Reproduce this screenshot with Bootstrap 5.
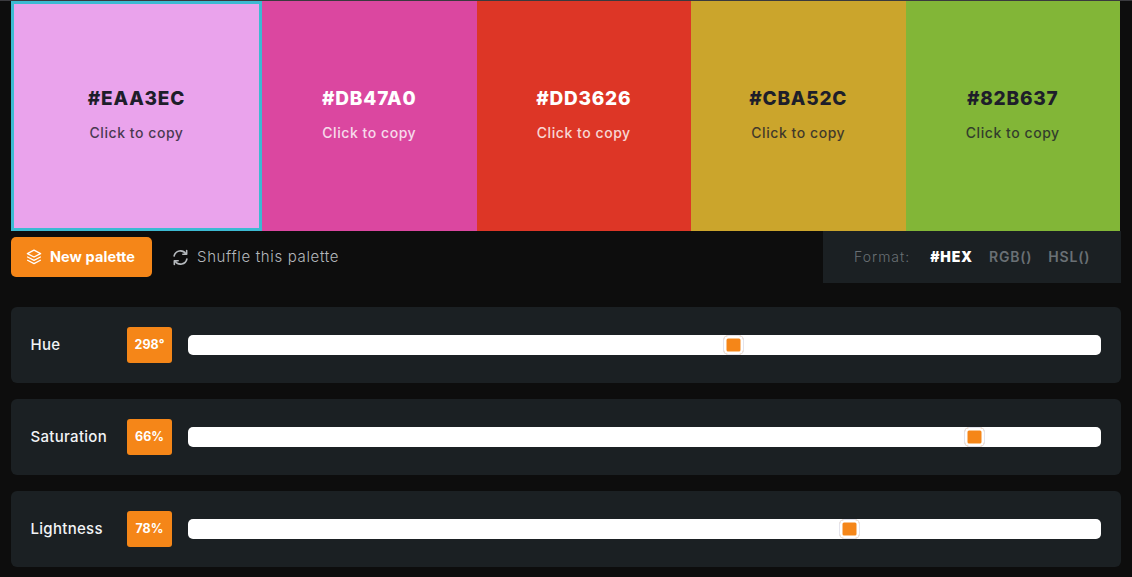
<!DOCTYPE html>
<html lang="en">
<head>
<meta charset="utf-8">
<title>Palette</title>
<link href="https://cdn.jsdelivr.net/npm/bootstrap@5.3.0/dist/css/bootstrap.min.css" rel="stylesheet">
<style>
html,body{height:577px;overflow:hidden}
body{background:#0d0d0d;font-family:Inter,"Liberation Sans",sans-serif;padding:0 11px 0 11px;border-top:1px solid #3a3a3e}
.swatches{height:230px;width:1109px}
.swatch{flex:1 1 0;color:#fff;padding-bottom:2px}
.swatch.first{flex:0 0 251px;border:3px solid #3cbad2}
.swatch.dark{color:#1e1e2a}
.hexcode{font-size:19px;font-weight:800;letter-spacing:.8px;line-height:24px;margin-bottom:12px}
.copyhint{font-size:14px;font-weight:500;letter-spacing:.55px;line-height:20px;opacity:.8}
.toolrow{height:76px;width:1110px}
.btn-new{background:#f58618;color:#fff;font-weight:700;font-size:14.5px;letter-spacing:.1px;height:40px;width:141px;margin-top:6px;border-radius:5px;border:0;padding:0;padding-right:2px}
.btn-new:hover{background:#f58618;color:#fff}
.btn-shuffle{color:#b4b8bc;font-size:15px;font-weight:300;letter-spacing:.65px;border:0;padding:0;margin:6px 0 0 20px;height:40px}
.btn-shuffle:hover{color:#b4b8bc}
.formatbox{background:#1b2023;height:52px;width:298px;padding:0 0 2px 31px;font-size:14px;font-weight:300;color:#6a7075;letter-spacing:1px}
.formatbox .fmt{font-weight:600;color:#6a7075;letter-spacing:.8px;margin-left:16px;font-size:14px}
.formatbox .fmt.on{color:#fff;font-weight:900;margin-left:20px;letter-spacing:.85px;font-size:14px}
.sliderpanel{background:#1b2023;height:76px;width:1110px;border-radius:6px;padding:0 20px 0 19.5px;margin-bottom:16px}
.sliderlabel{width:96.5px;flex:none;color:#f2f4f6;font-weight:500;font-size:15px;letter-spacing:.3px}
.valuebadge{background:#f58618;color:#fff;width:45px;height:36px;flex:none;border-radius:3px;font-size:12.5px;font-weight:700;margin-right:16px}
input.huerange{appearance:none;-webkit-appearance:none;flex:1 1 auto;min-width:0;height:20px;background:#fff;border-radius:5px;margin:0;display:block;outline:0}
input.huerange::-webkit-slider-thumb{-webkit-appearance:none;width:21px;height:20px;border-radius:5px;background:#f58618;border:1px solid #e4e4ec;box-shadow:inset 0 0 0 2.5px #fff}
</style>
</head>
<body>
<div class="swatches d-flex">
  <div class="swatch first dark d-flex flex-column align-items-center justify-content-center" style="background:#EAA3EC"><div class="hexcode">#EAA3EC</div><div class="copyhint">Click to copy</div></div>
  <div class="swatch d-flex flex-column align-items-center justify-content-center" style="background:#DB47A0"><div class="hexcode">#DB47A0</div><div class="copyhint">Click to copy</div></div>
  <div class="swatch d-flex flex-column align-items-center justify-content-center" style="background:#DD3626"><div class="hexcode">#DD3626</div><div class="copyhint">Click to copy</div></div>
  <div class="swatch dark d-flex flex-column align-items-center justify-content-center" style="background:#CBA52C"><div class="hexcode">#CBA52C</div><div class="copyhint">Click to copy</div></div>
  <div class="swatch dark d-flex flex-column align-items-center justify-content-center" style="background:#82B637"><div class="hexcode">#82B637</div><div class="copyhint">Click to copy</div></div>
</div>
<div class="toolrow d-flex align-items-start">
  <button class="btn btn-new d-inline-flex align-items-center justify-content-center gap-2">
    <svg width="16" height="16" viewBox="0 0 16 16" fill="none" stroke="currentColor" stroke-width="1.3" stroke-linejoin="round" stroke-linecap="round"><path d="M8 1.2 14.6 4.6 8 8 1.4 4.6Z"/><path d="M1.6 8 8 11.3 14.4 8"/><path d="M1.6 11.2 8 14.6 14.4 11.2"/></svg>
    New palette
  </button>
  <button class="btn btn-shuffle d-inline-flex align-items-center gap-2">
    <svg width="17" height="17" viewBox="0 0 16 16" fill="none" stroke="currentColor" stroke-width="1.5" stroke-linecap="round" stroke-linejoin="round"><path d="M2 6.6A6.1 6.1 0 0 1 13 4.4"/><path d="M13.8 1.4V5H10.2"/><path d="M14 9.4A6.1 6.1 0 0 1 3 11.6"/><path d="M2.2 14.6V11H5.8"/></svg>
    Shuffle this palette
  </button>
  <div class="formatbox ms-auto d-flex align-items-center">
    <span>Format:</span><span class="fmt on">#HEX</span><span class="fmt">RGB()</span><span class="fmt">HSL()</span>
  </div>
</div>
<div class="sliderpanel d-flex align-items-center">
  <div class="sliderlabel">Hue</div>
  <div class="valuebadge d-flex align-items-center justify-content-center">298°</div>
  <input class="huerange" type="range" min="0" max="100" step="0.01" value="59.93" aria-label="Hue">
</div>
<div class="sliderpanel d-flex align-items-center">
  <div class="sliderlabel">Saturation</div>
  <div class="valuebadge d-flex align-items-center justify-content-center">66%</div>
  <input class="huerange" type="range" min="0" max="100" step="0.01" value="86.98" aria-label="Saturation">
</div>
<div class="sliderpanel d-flex align-items-center">
  <div class="sliderlabel">Lightness</div>
  <div class="valuebadge d-flex align-items-center justify-content-center">78%</div>
  <input class="huerange" type="range" min="0" max="100" step="0.01" value="72.95" aria-label="Lightness">
</div>
<script src="https://cdn.jsdelivr.net/npm/bootstrap@5.3.0/dist/js/bootstrap.bundle.min.js"></script>
</body>
</html>
